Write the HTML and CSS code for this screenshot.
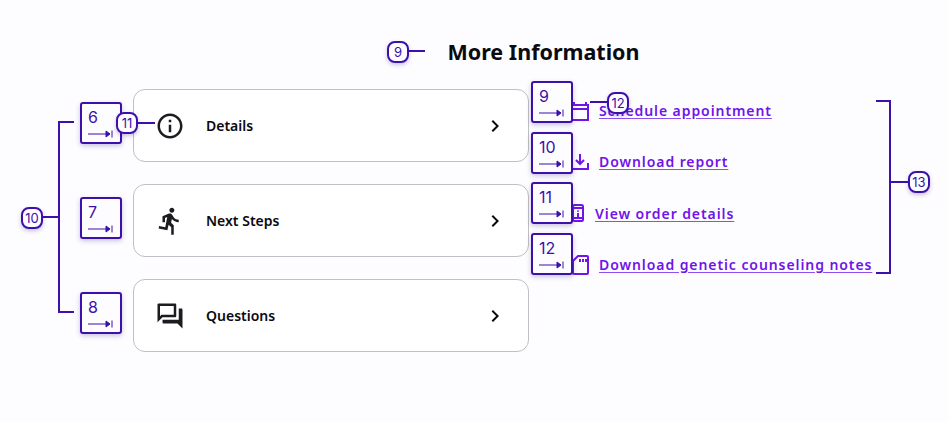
FILE: index.html
```html
<!DOCTYPE html>
<html lang="en">
<head>
  <meta charset="UTF-8" />
  <meta name="viewport" content="width=device-width, initial-scale=1.0"/>
  <title>More Information</title>
  <link rel="stylesheet" href="styles.css">
</head>
<body>
  <main class="page">
    <h1 class="title">More Information</h1>

    <div class="content">
      <div class="cards">
        <a class="card" href="#">
          <svg class="card-icon" viewBox="0 0 24 24"><path d="M11 7h2v2h-2zm0 4h2v6h-2zm1-9C6.48 2 2 6.48 2 12s4.48 10 10 10 10-4.48 10-10S17.52 2 12 2zm0 18c-4.41 0-8-3.59-8-8s3.59-8 8-8 8 3.59 8 8-3.59 8-8 8z"/></svg>
          <span class="card-label">Details</span>
          <svg class="chevron" viewBox="0 0 24 24"><path d="M10 6L8.59 7.41 13.17 12l-4.58 4.59L10 18l6-6z"/></svg>
        </a>
        <a class="card" href="#">
          <svg class="card-icon" viewBox="0 0 24 24"><path d="M13.49 5.48c1.1 0 2-.9 2-2s-.9-2-2-2-2 .9-2 2 .9 2 2 2zm-3.6 13.9l1-4.4 2.1 2v6h2v-7.5l-2.1-2 .6-3c1.3 1.5 3.3 2.5 5.5 2.5v-2c-1.9 0-3.5-1-4.3-2.4l-1-1.6c-.4-.6-1-1-1.7-1-.3 0-.5.1-.8.1l-5.2 2.2v4.7h2v-3.4l1.8-.7-1.6 8.1-4.9-1-.4 2 7 1.4z"/></svg>
          <span class="card-label">Next Steps</span>
          <svg class="chevron" viewBox="0 0 24 24"><path d="M10 6L8.59 7.41 13.17 12l-4.58 4.59L10 18l6-6z"/></svg>
        </a>
        <a class="card" href="#">
          <svg class="card-icon" viewBox="0 0 24 24"><path d="M15 4v7H5.17L4 12.17V4h11m1-2H3c-.55 0-1 .45-1 1v14l4-4h10c.55 0 1-.45 1-1V3c0-.55-.45-1-1-1zm5 4h-2v9H6v2c0 .55.45 1 1 1h11l4 4V7c0-.55-.45-1-1-1z"/></svg>
          <span class="card-label">Questions</span>
          <svg class="chevron" viewBox="0 0 24 24"><path d="M10 6L8.59 7.41 13.17 12l-4.58 4.59L10 18l6-6z"/></svg>
        </a>
      </div>

      <ul class="links">
        <li class="link-row">
          <svg class="link-icon" width="18" height="20" viewBox="0 0 18 20"><path d="M3 1v3M15 1v3M1 4h16v15H1zM1 8h16"/></svg>
          <a class="link" href="#">Schedule appointment</a>
        </li>
        <li class="link-row">
          <svg class="link-icon" width="18" height="17" viewBox="0 0 18 17"><path d="M9 1v10M5 7l4 4 4-4M1 10v6h16v-6"/></svg>
          <a class="link" href="#">Download report</a>
        </li>
        <li class="link-row">
          <svg class="link-icon" width="14" height="18" viewBox="0 0 14 18"><rect x="2" y="1" width="10" height="16" rx="1.5"/><path d="M2 4h10M2 14h10M7 6.5v1.2M7 9v4"/></svg>
          <a class="link" href="#">View order details</a>
        </li>
        <li class="link-row">
          <svg class="link-icon" width="18" height="20" viewBox="0 0 18 20"><path d="M7 1h9a1 1 0 0 1 1 1v16a1 1 0 0 1-1 1H3a1 1 0 0 1-1-1V6zM9 4v3M12 4v3M15 4v3"/></svg>
          <a class="link" href="#">Download genetic counseling notes</a>
        </li>
      </ul>
    </div>

    <!-- annotation layer, sits over the screen -->
    <div class="tab tab-a"><span>6</span><svg viewBox="0 0 25 8"><path d="M0 4h22M18 1l4 3-4 3zM24 .5v7"/></svg></div>
    <div class="tab tab-b"><span>7</span><svg viewBox="0 0 25 8"><path d="M0 4h22M18 1l4 3-4 3zM24 .5v7"/></svg></div>
    <div class="tab tab-c"><span>8</span><svg viewBox="0 0 25 8"><path d="M0 4h22M18 1l4 3-4 3zM24 .5v7"/></svg></div>
    <div class="tab tab-d"><span>9</span><svg viewBox="0 0 25 8"><path d="M0 4h22M18 1l4 3-4 3zM24 .5v7"/></svg></div>
    <div class="tab tab-e"><span>10</span><svg viewBox="0 0 25 8"><path d="M0 4h22M18 1l4 3-4 3zM24 .5v7"/></svg></div>
    <div class="tab tab-f"><span>11</span><svg viewBox="0 0 25 8"><path d="M0 4h22M18 1l4 3-4 3zM24 .5v7"/></svg></div>
    <div class="tab tab-g"><span>12</span><svg viewBox="0 0 25 8"><path d="M0 4h22M18 1l4 3-4 3zM24 .5v7"/></svg></div>

    <div class="bracket bracket-left"></div>
    <div class="bracket bracket-right"></div>

    <div class="rule rule-9"></div>
    <div class="rule rule-10"></div>
    <div class="rule rule-11"></div>
    <div class="rule rule-12"></div>
    <div class="rule rule-13"></div>

    <div class="badge badge-9">9</div>
    <div class="badge badge-10">10</div>
    <div class="badge badge-11">11</div>
    <div class="badge badge-12">12</div>
    <div class="badge badge-13">13</div>
  </main>
</body>
</html>
```

FILE: styles.css
```css
* {
  box-sizing: border-box;
}

body {
  margin: 0;
  background-color: #fdfdff;
  font-family: "Noto Sans", Arial, sans-serif;
  color: #0b0a10;
}

.page {
  position: relative;
  width: 948px;
  height: 422px;
  overflow: hidden;
  padding-top: 36px;
}

.title {
  display: flex;
  justify-content: center;
  margin: 0;
  padding-left: 139px;
  font-size: 21.5px;
  line-height: 32px;
  font-weight: 700;
}

.content {
  display: flex;
  gap: 42px;
  margin-top: 17px;
  padding-left: 133px;
}

.cards {
  display: flex;
  flex-direction: column;
  gap: 22px;
  width: 396px;
  margin-top: 4px;
}

.card {
  display: flex;
  align-items: center;
  height: 73px;
  padding: 0 21px 0 21px;
  background-color: #fff;
  border: 1px solid #bfbfc4;
  border-radius: 12px;
  color: #0b0a10;
  text-decoration: none;
}

.card-icon {
  width: 30px;
  height: 30px;
  flex-shrink: 0;
  fill: #1d1b20;
}

.card-label {
  flex: 1;
  margin-left: 21px;
  font-size: 14px;
  font-weight: 600;
}

.chevron {
  width: 24px;
  height: 24px;
  fill: #0b0a10;
}

.links {
  display: flex;
  flex-direction: column;
  margin: 0;
  padding: 0;
  list-style: none;
}

.link-row {
  display: flex;
  align-items: center;
  gap: 10px;
  height: 51.3px;
}

.link {
  color: #7014e8;
  font-size: 14px;
  font-weight: 600;
  letter-spacing: 0.92px;
  text-decoration: underline;
  text-decoration-color: #8f4ef0;
  text-underline-offset: 2px;
}

.link-icon {
  flex-shrink: 0;
  fill: none;
  stroke: #7014e8;
  stroke-width: 2;
}

/* annotations */
.tab {
  position: absolute;
  width: 41.5px;
  height: 42px;
  padding: 4px 6px 0;
  background-color: #fdfdff;
  border: 2px solid #3d0fab;
  border-radius: 3px;
  box-shadow: 0 2px 5px rgba(50, 20, 140, 0.25);
  color: #3d0fab;
  font-family: Inter, Arial, sans-serif;
  font-size: 16px;
  line-height: 18px;
}

.tab span {
  display: block;
}

.tab svg {
  display: block;
  width: 25px;
  height: 8px;
  margin-top: 4px;
  fill: #3d0fab;
  stroke: #3d0fab;
  stroke-width: 1;
}

.tab-a { left: 80px; top: 102px; }
.tab-b { left: 80px; top: 197px; }
.tab-c { left: 80px; top: 292px; }
.tab-d { left: 531px; top: 81px; }
.tab-e { left: 531px; top: 132px; }
.tab-f { left: 531px; top: 182px; }
.tab-g { left: 531px; top: 233px; }

.bracket {
  position: absolute;
  border: 2px solid #3d0fab;
}

.bracket-left {
  left: 58px;
  top: 121px;
  width: 16px;
  height: 192px;
  border-right: none;
}

.bracket-right {
  left: 876px;
  top: 100px;
  width: 15px;
  height: 174px;
  border-left: none;
}

.rule {
  position: absolute;
  height: 2px;
  background-color: #3d0fab;
}

.rule-9 { left: 406px; top: 50px; width: 19px; }
.rule-10 { left: 40px; top: 216px; width: 19px; }
.rule-11 { left: 135px; top: 122px; width: 20px; }
.rule-12 { left: 590px; top: 101px; width: 19px; }
.rule-13 { left: 890px; top: 181px; width: 20px; }

.badge {
  position: absolute;
  display: flex;
  align-items: center;
  justify-content: center;
  width: 22px;
  height: 22px;
  background-color: #fdfdff;
  border: 2px solid #3d0fab;
  border-radius: 8px;
  box-shadow: 0 2px 4px rgba(50, 20, 140, 0.25);
  color: #3d0fab;
  font-family: Inter, Arial, sans-serif;
  font-size: 13px;
}

.badge-9 { left: 387px; top: 41px; }
.badge-10 { left: 21px; top: 207px; }
.badge-11 { left: 116px; top: 112px; }
.badge-12 { left: 607px; top: 92px; }
.badge-13 { left: 908px; top: 171px; }
```
